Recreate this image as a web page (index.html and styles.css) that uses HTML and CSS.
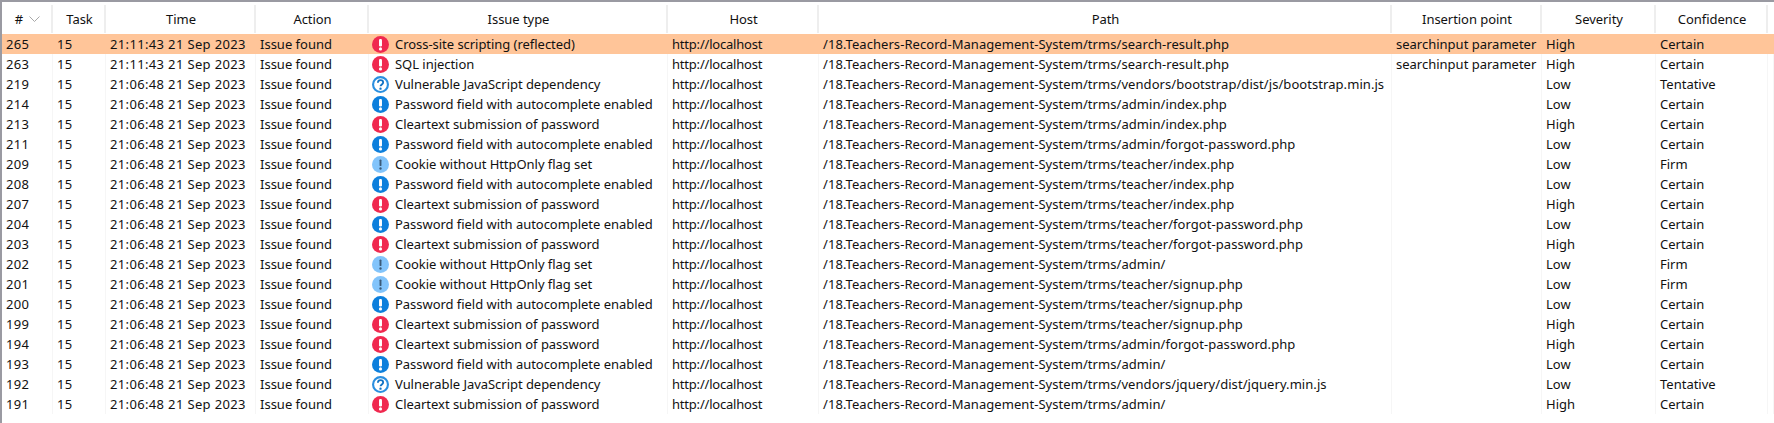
FILE: index.html
```html
<!DOCTYPE html>
<html lang="en">
  <head>
    <meta charset="UTF-8" />
    <meta name="viewport" content="width=device-width, initial-scale=1.0" />
    <title>Issues</title>
    <link rel="stylesheet" href="styles.css">
  </head>
  <body>
    <svg class="defs" width="0" height="0">
      <symbol id="icon-high" viewBox="0 0 16 16">
        <circle cx="8" cy="8" r="8" fill="#f0284f" />
        <rect x="6.6" y="2.8" width="2.8" height="7" rx="1.1" fill="#fff" />
        <circle cx="8" cy="12.2" r="1.5" fill="#fff" />
      </symbol>
      <symbol id="icon-low" viewBox="0 0 16 16">
        <circle cx="8" cy="8" r="8" fill="#0c7fdc" />
        <rect x="6.6" y="2.8" width="2.8" height="7" rx="1.1" fill="#fff" />
        <circle cx="8" cy="12.2" r="1.5" fill="#fff" />
      </symbol>
      <symbol id="icon-info" viewBox="0 0 16 16">
        <circle cx="8" cy="8" r="8" fill="#82c4fb" />
        <rect x="7.1" y="3.2" width="1.8" height="6.2" rx=".8" fill="#3a5a78" />
        <circle cx="8" cy="11.8" r="1.1" fill="#3a5a78" />
      </symbol>
      <symbol id="icon-tentative" viewBox="0 0 16 16">
        <circle cx="8" cy="8" r="7" fill="#fff" stroke="#2a8fe0" stroke-width="2" />
        <path d="M5.5 6.3C5.6 4.7 6.7 3.9 8 3.9c1.5 0 2.5.9 2.5 2.1 0 1.9-2.5 1.9-2.5 3.7" fill="none" stroke="#1273c4" stroke-width="1.7" />
        <circle cx="8" cy="11.9" r="1.1" fill="#1273c4" />
      </symbol>
    </svg>

    <div class="table">
      <div class="row head">
        <div class="cell">
          # 
          <svg class="sort" width="11" height="6" viewBox="0 0 11 6"><path d="M.5.5 5.5 5.5 10.5.5" fill="none" stroke="#a8a8a8" /></svg>
        </div>
        <div class="cell">Task</div>
        <div class="cell">Time</div>
        <div class="cell">Action</div>
        <div class="cell">Issue type</div>
        <div class="cell">Host</div>
        <div class="cell">Path</div>
        <div class="cell">Insertion point</div>
        <div class="cell">Severity</div>
        <div class="cell">Confidence</div>
        <div class="cell"></div>
      </div>
      <div id="rows"></div>
    </div>

    <script>
      const base = "/18.Teachers-Record-Management-System/trms/";
      const xss = "Cross-site scripting (reflected)";
      const sqli = "SQL injection";
      const vuln = "Vulnerable JavaScript dependency";
      const auto = "Password field with autocomplete enabled";
      const clear = "Cleartext submission of password";
      const cookie = "Cookie without HttpOnly flag set";
      const icons = {};
      icons[xss] = icons[sqli] = icons[clear] = "icon-high";
      icons[vuln] = "icon-tentative";
      icons[auto] = "icon-low";
      icons[cookie] = "icon-info";

      const data = [
        [265, "21:11:43", xss, "search-result.php", "searchinput parameter", "High", "Certain"],
        [263, "21:11:43", sqli, "search-result.php", "searchinput parameter", "High", "Certain"],
        [219, "21:06:48", vuln, "vendors/bootstrap/dist/js/bootstrap.min.js", "", "Low", "Tentative"],
        [214, "21:06:48", auto, "admin/index.php", "", "Low", "Certain"],
        [213, "21:06:48", clear, "admin/index.php", "", "High", "Certain"],
        [211, "21:06:48", auto, "admin/forgot-password.php", "", "Low", "Certain"],
        [209, "21:06:48", cookie, "teacher/index.php", "", "Low", "Firm"],
        [208, "21:06:48", auto, "teacher/index.php", "", "Low", "Certain"],
        [207, "21:06:48", clear, "teacher/index.php", "", "High", "Certain"],
        [204, "21:06:48", auto, "teacher/forgot-password.php", "", "Low", "Certain"],
        [203, "21:06:48", clear, "teacher/forgot-password.php", "", "High", "Certain"],
        [202, "21:06:48", cookie, "admin/", "", "Low", "Firm"],
        [201, "21:06:48", cookie, "teacher/signup.php", "", "Low", "Firm"],
        [200, "21:06:48", auto, "teacher/signup.php", "", "Low", "Certain"],
        [199, "21:06:48", clear, "teacher/signup.php", "", "High", "Certain"],
        [194, "21:06:48", clear, "admin/forgot-password.php", "", "High", "Certain"],
        [193, "21:06:48", auto, "admin/", "", "Low", "Certain"],
        [192, "21:06:48", vuln, "vendors/jquery/dist/jquery.min.js", "", "Low", "Tentative"],
        [191, "21:06:48", clear, "admin/", "", "High", "Certain"],
      ];

      const rows = document.getElementById("rows");
      data.forEach(function (d, i) {
        const row = document.createElement("div");
        row.className = i === 0 ? "row item selected" : "row item";
        row.innerHTML =
          '<div class="cell num">' + d[0] + "</div>" +
          '<div class="cell num">15</div>' +
          '<div class="cell num">' + d[1] + " 21 Sep 2023</div>" +
          '<div class="cell">Issue found</div>' +
          '<div class="cell issue"><svg class="icon"><use href="#' + icons[d[2]] + '"></use></svg>' + d[2] + "</div>" +
          '<div class="cell host">http://localhost</div>' +
          '<div class="cell path">' + base + d[3] + "</div>" +
          '<div class="cell">' + d[4] + "</div>" +
          '<div class="cell">' + d[5] + "</div>" +
          '<div class="cell">' + d[6] + "</div>" +
          '<div class="cell"></div>';
        rows.appendChild(row);
      });
    </script>
  </body>
</html>
```

FILE: styles.css
```css
body {
  margin: 0;
  background-color: white;
  color: #111;
  font-family: "Noto Sans", sans-serif;
  font-size: 13px;
}

.defs {
  display: block;
  height: 0;
}

.table {
  height: 423px;
  box-sizing: border-box;
  border-top: 2px solid #9a9aa2;
  border-left: 2px solid #9a9aa2;
}

.row {
  display: grid;
  grid-template-columns: 51px 53px 150px 113px 299px 151px 573px 150px 114px 112px 1fr;
}

.head {
  height: 32px;
  padding-top: 1px;
  box-sizing: border-box;
  align-items: center;
  text-align: center;
}

.head .cell {
  height: 28px;
  padding-left: 2px;
  line-height: 28px;
  letter-spacing: -0.05px;
  border-right: 2px solid #eeeeee;
  box-sizing: border-box;
}

.head .cell:last-child {
  border-right: 0;
}

.sort {
  margin-left: 3px;
  vertical-align: 2px;
}

.item {
  height: 20px;
  line-height: 21px;
}

.item .cell {
  padding-left: 4px;
  white-space: nowrap;
  overflow: hidden;
  border-right: 1px solid #f6f6f6;
  box-sizing: border-box;
}

.item .num {
  letter-spacing: 0.35px;
}

.item .issue {
  padding-left: 3px;
  letter-spacing: -0.04px;
}

.item .host {
  letter-spacing: -0.2px;
}

.item .path {
  letter-spacing: 0.06px;
}

.selected {
  background-color: #ffc599;
}

.selected .cell {
  border-right-color: transparent;
}

.icon {
  width: 17px;
  height: 17px;
  margin-right: 6px;
  vertical-align: -4px;
}
```
